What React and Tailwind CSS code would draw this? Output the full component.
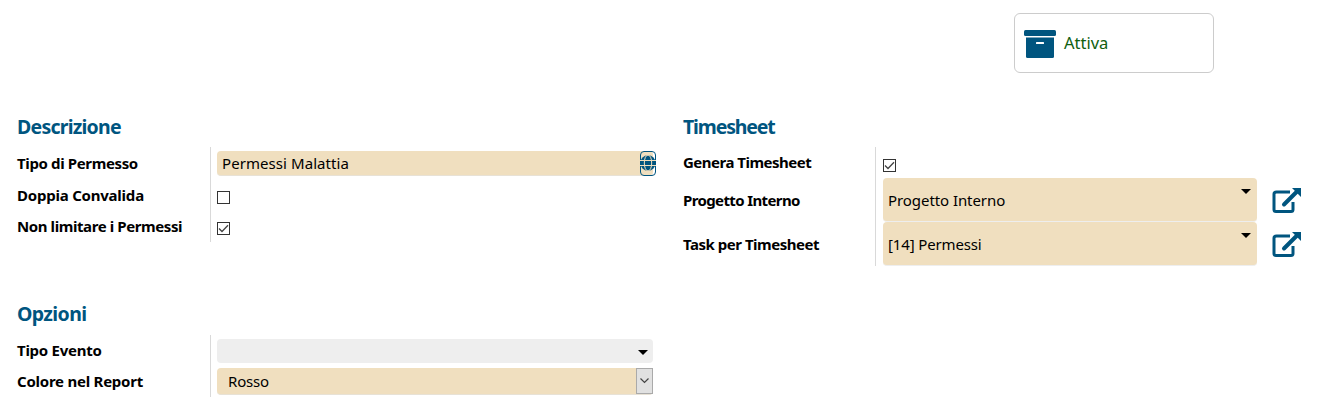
import React from "react";

const heading = "flex h-[28px] items-center whitespace-nowrap text-[19.5px] font-bold text-[#00557f]";
const label = "w-[193px] shrink-0 whitespace-nowrap pb-[2px] text-[15px] leading-5 font-bold text-black";

function Checkbox({ checked }) {
  return (
    <span className="mt-[3px] flex size-[13px] shrink-0 border border-[#333] bg-white">
      {checked && (
        <svg width="11" height="11" viewBox="0 0 11 11" fill="none" stroke="#444" strokeWidth="1.3">
          <path d="M1 5.5 4 8.5 10 2.3" />
        </svg>
      )}
    </span>
  );
}

function Caret() {
  return (
    <svg width="10" height="5" viewBox="0 0 10 5" className="shrink-0">
      <path d="M0 0h10L5 5z" fill="#000" />
    </svg>
  );
}

function Globe() {
  return (
    <svg width="16" height="16" viewBox="0 0 16 16" className="shrink-0">
      <circle cx="8" cy="8" r="7.7" fill="#00557f" />
      <g fill="none" stroke="#f0dfbf" strokeWidth="1">
        <path d="M0 5.5h16M0 10.5h16" />
        <ellipse cx="8" cy="8" rx="3.7" ry="8" />
      </g>
    </svg>
  );
}

function ExternalLink() {
  return (
    <svg width="30" height="27" viewBox="0 0 30 27" className="shrink-0" fill="none" stroke="#00557f">
      <path d="M18 5H4.5Q2 5 2 7V22.500Q2 24.500 4 24.500H19Q21 24.500 21 22.500V15" strokeWidth="3" />
      <path d="M12 17.500 25 4.500" strokeWidth="4" strokeLinecap="round" />
      <path d="M20 1H29V10z" fill="#00557f" stroke="none" />
    </svg>
  );
}

function Archive() {
  return (
    <svg width="32" height="28" viewBox="0 0 32 28" className="mt-[2px] shrink-0" fill="#00557f">
      <rect width="32" height="6" rx="1.5" />
      <path d="M2 7.500H30V26.500Q30 28 28.500 28H3.500Q2 28 2 26.500z" />
      <rect x="12" y="12" width="8" height="2" rx="0.500" fill="#fff" />
    </svg>
  );
}

function LinkedField({ name, value, nameClass, valueClass }) {
  return (
    <div className="flex h-11 items-center">
      <div className="w-[192px] shrink-0 text-[15px] leading-5 font-bold whitespace-nowrap"><span className={nameClass}>{name}</span></div>
      <div className="flex h-11 w-[382px] border-l border-[#d9d9d9] pl-[7px]">
        <div className="flex h-11 flex-1 items-center justify-between rounded-[4px] border-b border-[#eeeeee] bg-[#f0dfbf] pr-[6px] pl-[5px]">
          <span className={valueClass}>{value}</span>
          <span className="mb-[16px] flex"><Caret /></span>
        </div>
      </div>
      <div className="ml-[15px] flex"><ExternalLink /></div>
    </div>
  );
}

export default function App() {
  return (
    <main className="h-[416px] w-[1327px] overflow-hidden bg-white font-['Noto_Sans',sans-serif] text-[15px] leading-5 text-black">
      <header className="flex h-[113px] justify-end pt-[13px] pr-[113px]">
        <button className="flex h-[60px] w-[200px] items-center rounded-[6px] border border-[#ccc] bg-white pl-[9px]">
          <Archive />
          <span className="ml-2 text-[16.5px] text-[#106010]">Attiva</span>
        </button>
      </header>

      <div className="flex pl-[17px]">
        <section className="w-[666px] shrink-0">
          <h2 className={heading}><span className="tracking-[-0.77px]">Descrizione</span></h2>
          <div className="mt-[6px] h-[95px]">
            <div className="flex h-[33px] items-center">
              <div className={label}><span className="tracking-[-0.37px]">Tipo di Permesso</span></div>
              <div className="flex h-[33px] items-center border-l border-[#d9d9d9] pl-[6px]">
                <div className="mb-px flex h-[25px] w-[436px] items-center rounded-[4px] border-b border-[#e8e2d6] bg-[#f0dfbf] pl-[5px]">
                  <span className="tracking-[0.07px]">Permessi Malattia</span>
                </div>
                <span className="mb-px -ml-[13px] flex h-[25px] w-[16px] items-center justify-center rounded-[4px] border border-[#00557f]">
                  <Globe />
                </span>
              </div>
            </div>
            <div className="flex h-[31px] items-center">
              <div className={label}><span className="tracking-[-0.22px]">Doppia Convalida</span></div>
              <div className="flex h-[31px] items-center border-l border-[#d9d9d9] pl-[6px]"><Checkbox /></div>
            </div>
            <div className="flex h-[31px] items-center">
              <div className={label}><span className="tracking-[-0.41px]">Non limitare i Permessi</span></div>
              <div className="flex h-[31px] items-center border-l border-[#d9d9d9] pl-[6px]"><Checkbox checked /></div>
            </div>
          </div>
        </section>

        <section className="w-[640px] shrink-0">
          <h2 className={heading}><span className="tracking-[-1.15px]">Timesheet</span></h2>
          <div className="mt-[6px]">
            <div className="flex h-[31px] items-center">
              <div className="w-[192px] shrink-0 pb-[2px] font-bold whitespace-nowrap"><span className="tracking-[-0.5px]">Genera Timesheet</span></div>
              <div className="flex h-[31px] items-center border-l border-[#d9d9d9] pt-[3px] pl-[7px]"><Checkbox checked /></div>
            </div>
            <LinkedField name="Progetto Interno" value="Progetto Interno" nameClass="tracking-[-0.62px]" valueClass="tracking-[-0.07px]" />
            <LinkedField name="Task per Timesheet" value="[14] Permessi" nameClass="tracking-[-0.48px]" valueClass="tracking-[-0.14px]" />
          </div>
        </section>
      </div>

      <section className="mt-[34px] pl-[17px]">
        <h2 className={heading}><span className="tracking-[-0.6px]">Opzioni</span></h2>
        <div className="mt-[7px]">
          <div className="flex h-[31px] items-center">
            <div className={label}><span className="tracking-[-0.27px]">Tipo Evento</span></div>
            <div className="flex h-[31px] items-center border-l border-[#d9d9d9] pl-[6px]">
              <div className="mt-px flex h-6 w-[436px] items-center justify-end rounded-[4px] bg-[#eeeeee] pt-[3px] pr-[5px]"><Caret /></div>
            </div>
          </div>
          <div className="flex h-[31px] items-center">
            <div className={label}><span className="tracking-[-0.24px]">Colore nel Report</span></div>
            <div className="flex h-[31px] items-center border-l border-[#d9d9d9] pl-[6px]">
              <div className="flex h-[27px] w-[436px] items-center justify-between rounded-[4px] border-b border-[#e8e2d6] bg-[#f0dfbf] pl-[11px]">
                <span className="tracking-[-0.2px]">Rosso</span>
                <span className="flex h-[26px] w-[17px] items-center justify-center border border-[#aaa] bg-[#e1e1e1]">
                  <svg width="9" height="6" viewBox="0 0 9 6" fill="none" stroke="#444" strokeWidth="1.2"><path d="m.5.5 4 4 4-4" /></svg>
                </span>
              </div>
            </div>
          </div>
        </div>
      </section>
    </main>
  );
}
